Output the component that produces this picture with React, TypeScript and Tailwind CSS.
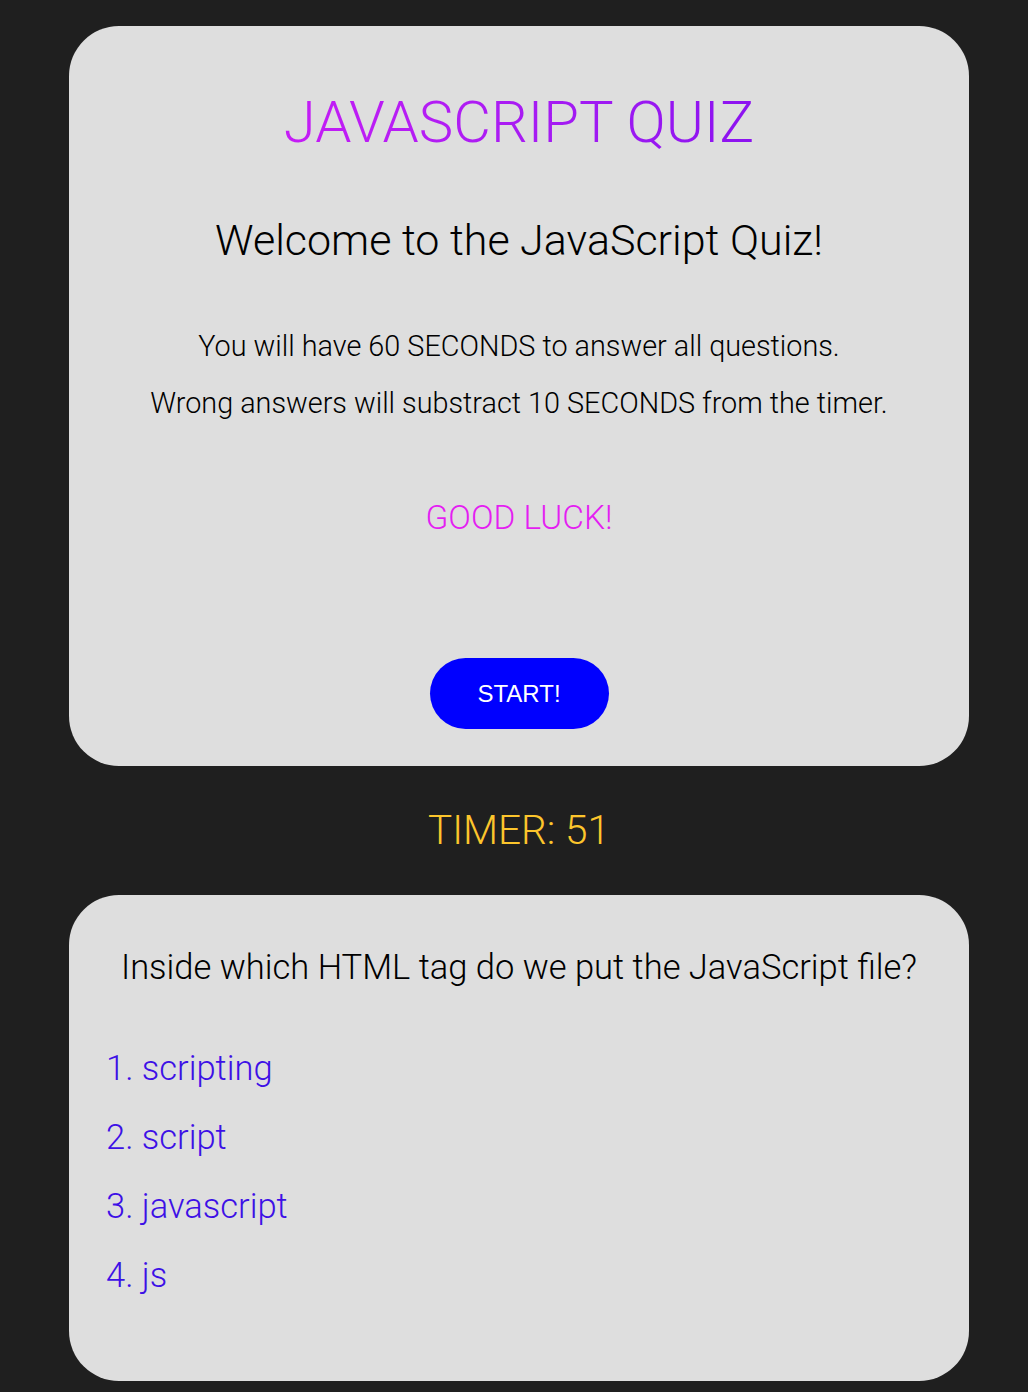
import React from "react";

const answers = ["scripting", "script", "javascript", "js"];

export default function App() {
	return (
		<div
			className="min-h-[1392px] w-full bg-[#1f1f1f] pt-[26px] pl-[10px]"
			style={{ fontFamily: "Roboto, 'Noto Sans', sans-serif" }}
		>
			{/* start card */}
			<div className="mx-auto flex w-[900px] flex-col items-center rounded-[50px] bg-[#dedede] pt-[67px] pb-[37px] font-light">
				<h1 className="bg-gradient-to-r from-[#c61cf6] to-[#8c12f0] bg-clip-text text-[58px] leading-none text-transparent">
					JAVASCRIPT QUIZ
				</h1>
				<h2 className="mt-[68px] text-[43px] leading-none text-black">
					Welcome to the JavaScript Quiz!
				</h2>
				<div className="mt-[56px] text-center text-[28.8px] leading-[57px] text-black">
					<p>You will have 60 SECONDS to answer all questions.</p>
					<p>Wrong answers will substract 10 SECONDS from the timer.</p>
				</div>
				<p className="mt-[69px] text-[33.4px] leading-none text-[#e41ef2]">GOOD LUCK!</p>
				<button
					type="button"
					className="mt-[124px] h-[71px] w-[179px] rounded-full bg-[#0000ff] text-[24px] font-normal text-white"
					style={{ fontFamily: "'Liberation Sans', Arial, sans-serif" }}
				>
					START!
				</button>
			</div>

			{/* timer */}
			<p className="my-[44px] text-center text-[40.5px] font-light leading-none text-[#fcc52c]">
				TIMER: 51
			</p>

			{/* question card */}
			<div className="mx-auto w-[900px] rounded-[50px] bg-[#dedede] pt-[55px] pb-[88px] font-light">
				<h3 className="text-center text-[34.5px] leading-none text-black">
					Inside which HTML tag do we put the JavaScript file?
				</h3>
				<ul className="mt-[67px] flex flex-col gap-[34.5px] pl-[37px]">
					{answers.map((a, i) => (
						<li key={a} className="text-[34.5px] leading-none text-[#3d10e6]">
							{i + 1}. {a}
						</li>
					))}
				</ul>
			</div>
		</div>
	);
}
